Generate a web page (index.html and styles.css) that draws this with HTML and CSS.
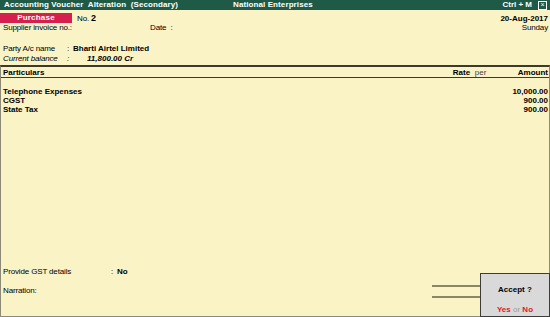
FILE: index.html
```html
<!DOCTYPE html>
<html>
<head>
  <meta charset="UTF-8">
  <link rel="stylesheet" href="styles.css">
</head>
<body>
  <div class="screen">
    <div class="titlebar">
      <span class="title-left">Accounting Voucher&nbsp; Alteration&nbsp; (Secondary)</span>
      <span class="title-mid">National Enterprises</span>
      <span class="title-right">Ctrl + M <span class="close-box">&times;</span></span>
    </div>

    <div class="voucher-head">
      <div class="row first">
        <div class="row-left">
          <span class="badge">Purchase</span>
          <span class="vno">No. <b>2</b></span>
        </div>
        <b>20-Aug-2017</b>
      </div>
      <div class="row">
        <div class="row-left">
          <span class="supplier">Supplier invoice no.:</span>
          <span>Date&nbsp; :</span>
        </div>
        <span>Sunday</span>
      </div>
      <div class="party">
        <div class="field"><span class="label">Party A/c name</span><span class="colon">:</span><b>Bharti Airtel Limited</b></div>
        <div class="field balance"><span class="label">Current balance</span><span class="colon">:</span><b class="bal-value">11,800.00 Cr</b></div>
      </div>
    </div>

    <div class="panel">
      <div class="colhead">
        <span class="col-part">Particulars</span>
        <span class="col-rate">Rate</span>
        <span class="col-per">per</span>
        <span class="col-amt">Amount</span>
      </div>
      <div class="entries">
        <div class="entry"><span>Telephone Expenses</span><span>10,000.00</span></div>
        <div class="entry"><span>CGST</span><span>900.00</span></div>
        <div class="entry"><span>State Tax</span><span>900.00</span></div>
      </div>
      <div class="footer">
        <div class="field"><span class="gst-label">Provide GST details</span><span class="colon">:</span><b>No</b></div>
        <div class="narration">Narration:</div>
        <div class="totals">
          <div class="total-rule"></div>
          <div class="total-rule"></div>
        </div>
      </div>

      <div class="accept">
        <b>Accept ?</b>
        <div class="answers"><span class="yn">Yes</span> <span class="or">or</span> <span class="yn">No</span></div>
      </div>
    </div>
  </div>
</body>
</html>
```

FILE: styles.css
```css
body {
  margin: 0;
  font-family: 'Liberation Sans', Arial, sans-serif;
  font-size: 8px;
  letter-spacing: -0.15px;
  color: #000;
}
b {
  font-weight: bold;
  letter-spacing: 0;
}
.screen {
  width: 550px;
  height: 317px;
  background: #faf3c6;
  display: flex;
  flex-direction: column;
  overflow: hidden;
}
.titlebar {
  height: 10px;
  background: #1f5a47;
  color: #fff;
  font-weight: bold;
  font-size: 8px;
  letter-spacing: 0.1px;
  line-height: 10px;
  display: flex;
  align-items: center;
  padding: 0 3px 0 4px;
}
.title-left {
  width: 229px;
}
.title-mid {
  flex: 1;
}
.title-right {
  display: flex;
  align-items: center;
  gap: 6px;
  letter-spacing: 0;
}
.close-box {
  width: 7px;
  height: 7px;
  border: 1px solid #fff;
  font-size: 7px;
  line-height: 6px;
  text-align: center;
  font-weight: normal;
}
.voucher-head {
  padding: 3px 2px 0 0;
  line-height: 9px;
}
.row {
  display: flex;
  justify-content: space-between;
  align-items: center;
  height: 9px;
}
.row.first {
  height: 10px;
}
.row-left {
  display: flex;
  align-items: center;
}
.badge {
  width: 72px;
  height: 10px;
  background: #d61f4f;
  color: #fff;
  font-weight: bold;
  font-size: 8px;
  letter-spacing: 0.2px;
  text-align: center;
  line-height: 10px;
  margin-right: 5px;
}
.vno b {
  font-size: 9px;
}
.supplier {
  width: 147px;
  padding-left: 3px;
}
.party {
  padding: 11px 0 0 3px;
}
.field {
  display: flex;
  align-items: center;
  height: 10px;
}
.label {
  width: 64px;
}
.colon {
  width: 6px;
}
.balance {
  font-style: italic;
}
.bal-value {
  padding-left: 14px;
}
.panel {
  flex: 1;
  position: relative;
  display: flex;
  flex-direction: column;
  margin-top: 2px;
  border-top: 2px solid #3c3a2c;
  border-left: 1px solid #8d8a78;
  border-right: 1px solid #8d8a78;
  border-bottom: 1px solid #8d8a78;
}
.colhead {
  display: flex;
  align-items: center;
  height: 10px;
  padding: 0 1px 0 2px;
  border-bottom: 1px solid #3c3a2c;
  font-weight: bold;
  letter-spacing: 0;
}
.col-part {
  flex: 1;
}
.col-rate {
  width: 22px;
}
.col-per {
  width: 43px;
  font-weight: normal;
  color: #444;
}
.entries {
  padding: 9px 1px 0 2px;
  font-weight: bold;
  letter-spacing: 0;
  line-height: 9px;
}
.entry {
  display: flex;
  justify-content: space-between;
}
.footer {
  margin-top: auto;
  padding: 0 0 0 2px;
  position: relative;
}
.gst-label {
  width: 108px;
}
.narration {
  height: 10px;
  margin-top: 10px;
  margin-bottom: 20px;
}
.totals {
  position: absolute;
  right: 69px;
  top: 19px;
  width: 48px;
  display: flex;
  flex-direction: column;
  gap: 9px;
}
.total-rule {
  height: 2px;
  background: #8b8666;
}
.accept {
  position: absolute;
  right: -1px;
  bottom: -1px;
  width: 68px;
  height: 42px;
  background: #d9d9d9;
  border: 1px solid #3c3c3c;
  display: flex;
  flex-direction: column;
  align-items: center;
  justify-content: flex-end;
  font-size: 8px;
  letter-spacing: 0;
}
.accept b {
  margin-bottom: 11px;
}
.answers {
  margin-bottom: 2px;
}
.yn {
  color: #e8141c;
  font-weight: bold;
}
.or {
  color: #999;
}
```
